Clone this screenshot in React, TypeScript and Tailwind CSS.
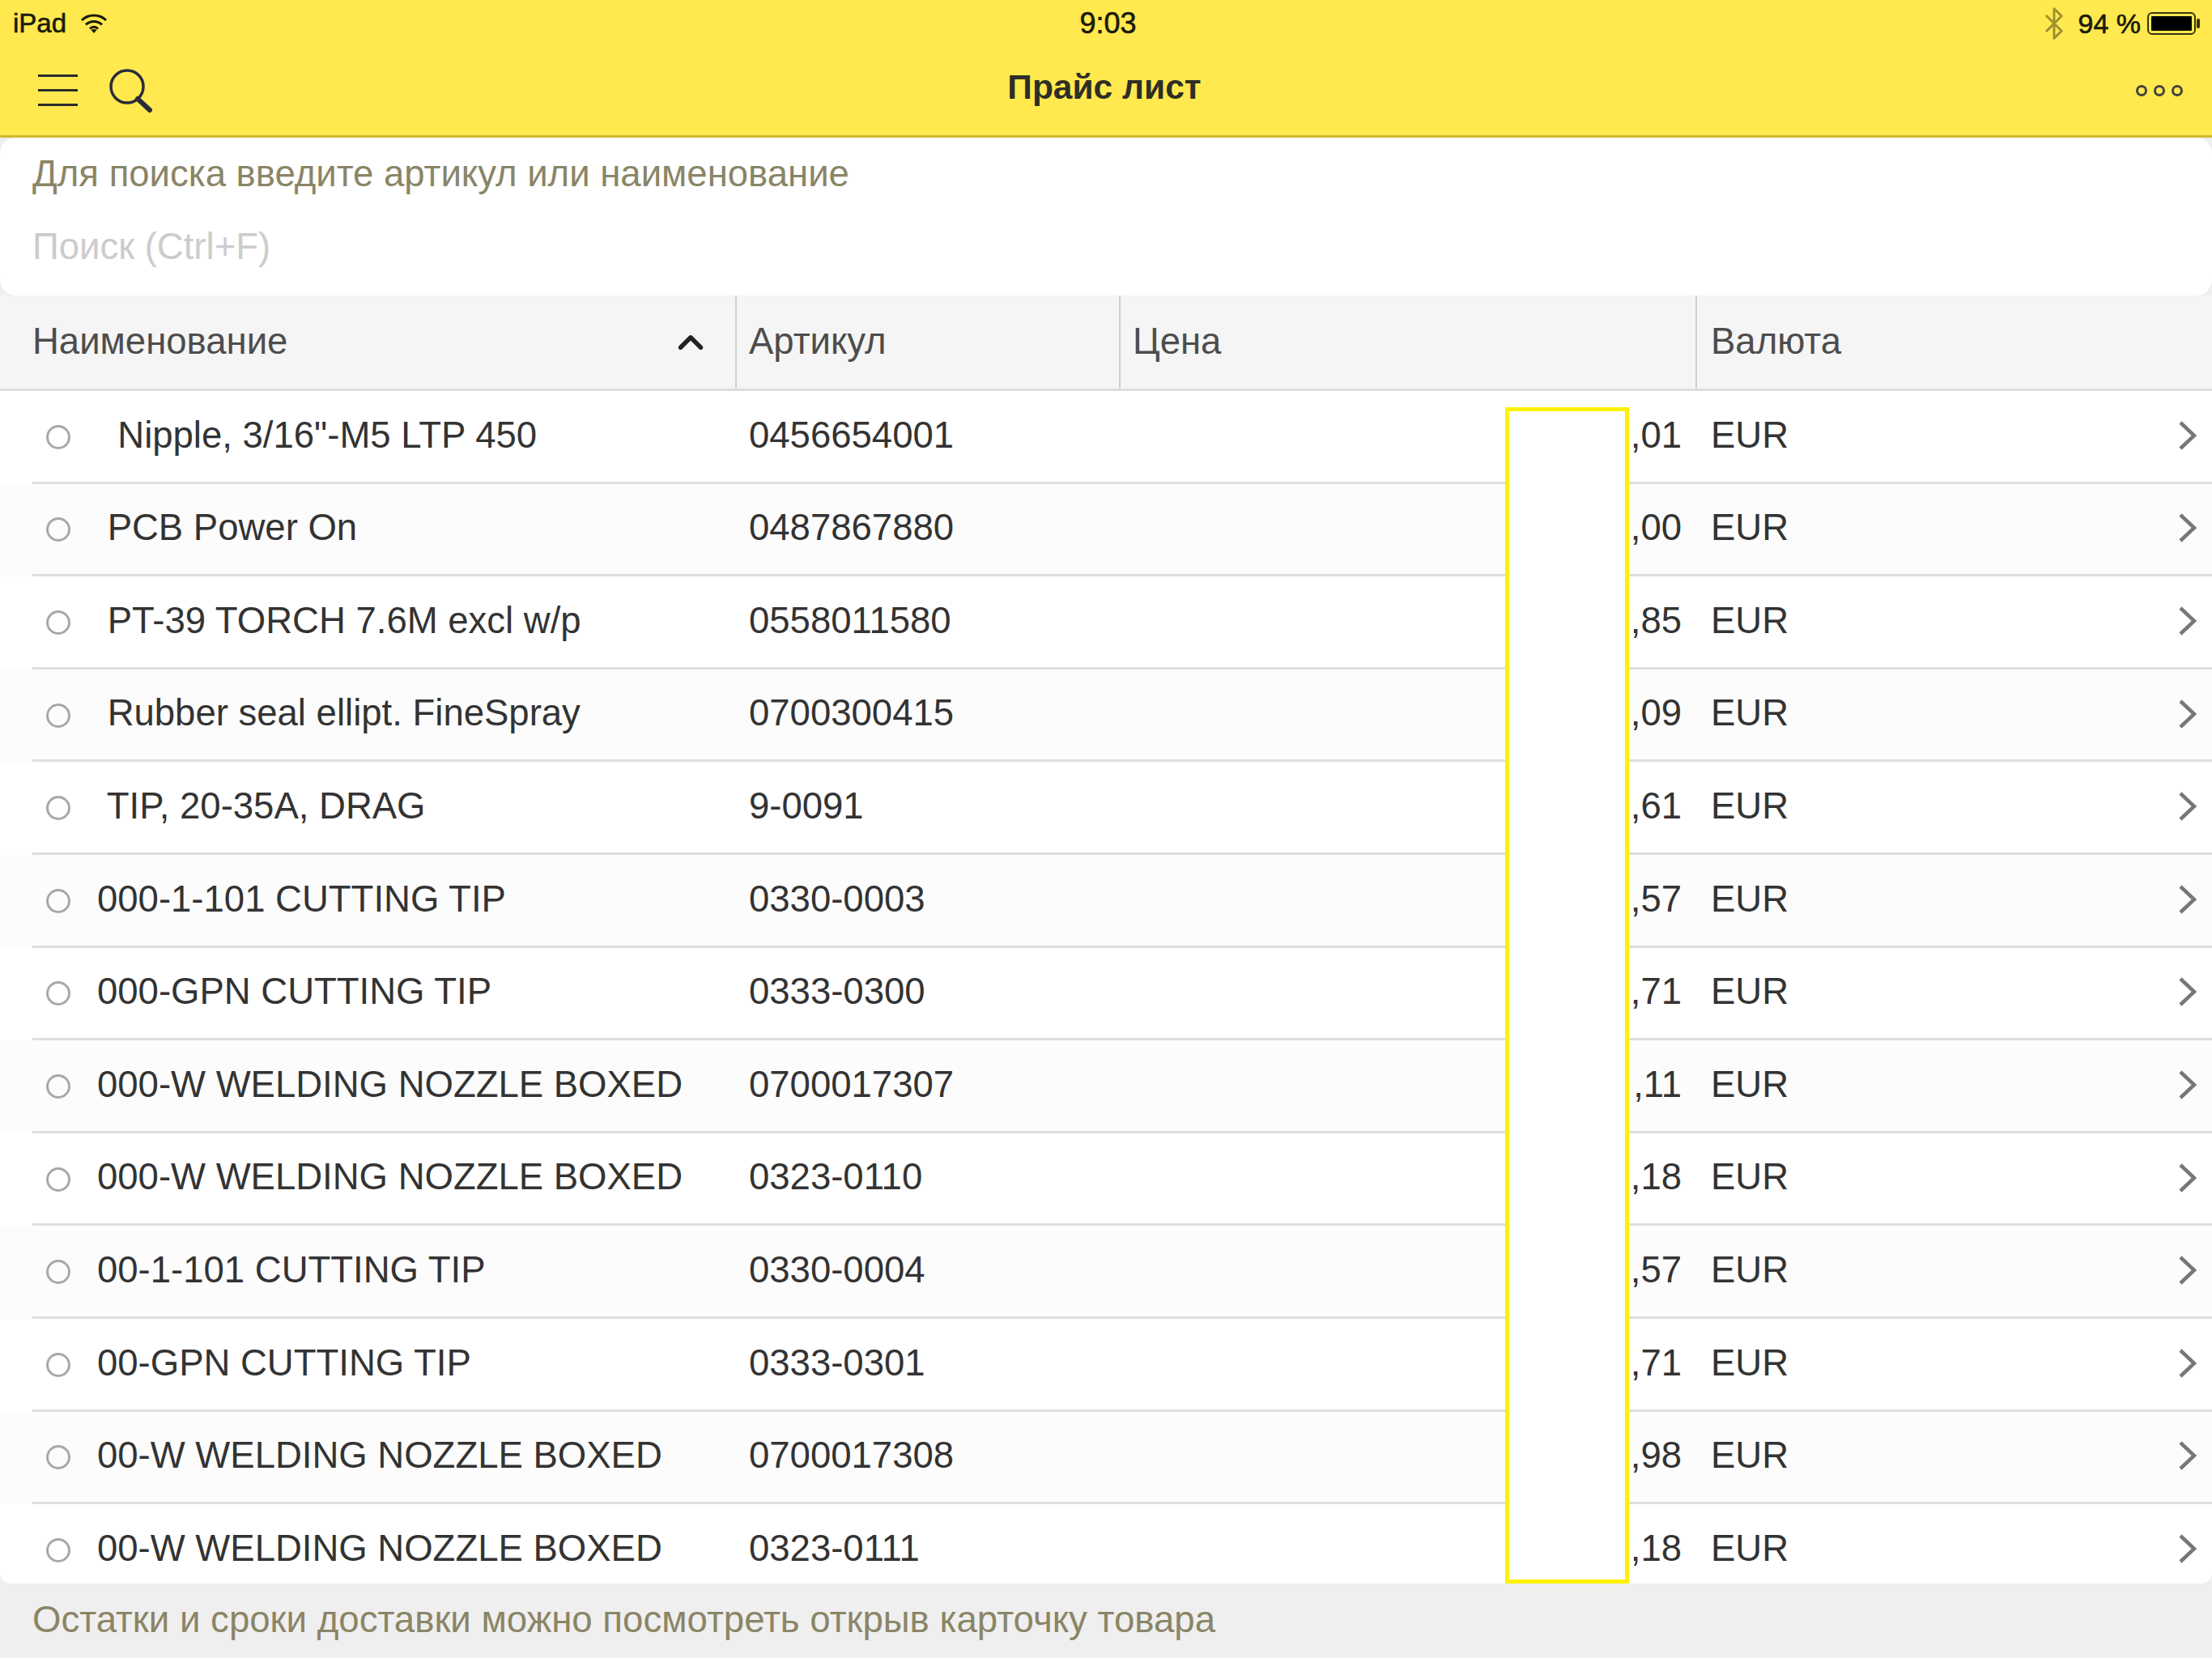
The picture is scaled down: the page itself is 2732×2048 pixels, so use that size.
import React from 'react';
import { Bluetooth, ChevronUp } from 'lucide-react';

const rows = [
  ['  Nipple, 3/16"-M5 LTP 450', '0456654001', ',01'],
  [' PCB Power On', '0487867880', ',00'],
  [' PT-39 TORCH 7.6M excl w/p', '0558011580', ',85'],
  [' Rubber seal ellipt. FineSpray', '0700300415', ',09'],
  [' TIP, 20-35A, DRAG', '9-0091', ',61'],
  ['000-1-101 CUTTING TIP', '0330-0003', ',57'],
  ['000-GPN CUTTING TIP', '0333-0300', ',71'],
  ['000-W WELDING NOZZLE BOXED', '0700017307', ',11'],
  ['000-W WELDING NOZZLE BOXED', '0323-0110', ',18'],
  ['00-1-101 CUTTING TIP', '0330-0004', ',57'],
  ['00-GPN CUTTING TIP', '0333-0301', ',71'],
  ['00-W WELDING NOZZLE BOXED', '0700017308', ',98'],
  ['00-W WELDING NOZZLE BOXED', '0323-0111', ',18'],
];

const StatusBar = () => (
  <div className="flex h-[56px] items-center justify-between px-[16px] pt-[2px] text-[#1a1a0a] [-webkit-text-stroke:0.6px_#1a1a0a]">
    <div className="flex w-[800px] items-center gap-[17px] text-[33px]">
      <span>iPad</span>
      <svg width="34" height="26" viewBox="0 0 34 26" fill="none" stroke="#1a1a0a">
        <path d="M2 9C10 1 24 1 32 9" strokeWidth="3" />
        <path d="M7 14.5C12.5 9 21.5 9 27 14.5" strokeWidth="3" />
        <path d="M12 19.5C15 16.5 19 16.5 22 19.5" strokeWidth="3" />
        <path d="M17 25L13.5 21C15.5 19.6 18.5 19.6 20.5 21Z" fill="#1a1a0a" stroke="none" />
      </svg>
    </div>
    <span className="pl-[5px] text-[36px]">9:03</span>
    <div className="flex w-[800px] items-center justify-end text-[34px]">
      <Bluetooth className="mr-[7px] h-[44px] w-[44px] text-[#9c9030]" strokeWidth={1.6} />
      <span className="mr-[8px]">94 %</span>
      <svg width="66" height="28" viewBox="0 0 66 28" className="mr-[-2px]">
        <rect x="1" y="1" width="58" height="26" rx="5" fill="none" stroke="#3a3510" strokeWidth="2" />
        <rect x="5" y="5" width="50" height="18" rx="1" fill="#000" />
        <rect x="61" y="8" width="4" height="12" rx="2" fill="#3a3510" />
      </svg>
    </div>
  </div>
);

const NavBar = () => (
  <div className="relative flex h-[114px] items-center justify-between border-b-[3px] border-[#cdb92e] pl-[47px] pr-[36px]">
    <div className="flex items-center gap-[38px]">
      <div className="flex w-[49px] flex-col gap-[15px]">
        <div className="h-[3px] bg-[#2b2b2b]" />
        <div className="h-[3px] bg-[#2b2b2b]" />
        <div className="h-[3px] bg-[#2b2b2b]" />
      </div>
      <svg width="56" height="56" viewBox="0 0 56 56" fill="none" stroke="#2b2b3a">
        <circle cx="23" cy="23" r="20" strokeWidth="3.5" />
        <path d="M36 38L51 52" strokeWidth="6" strokeLinecap="round" />
      </svg>
    </div>
    <span className="absolute inset-x-0 top-[20px] pr-[4px] text-center text-[42.5px] font-bold leading-[64px] text-[#2e2e24]">Прайс лист</span>
    <div className="flex gap-[8px]">
      <div className="h-[14px] w-[14px] rounded-full border-[3px] border-[#44443a]" />
      <div className="h-[14px] w-[14px] rounded-full border-[3px] border-[#44443a]" />
      <div className="h-[14px] w-[14px] rounded-full border-[3px] border-[#44443a]" />
    </div>
  </div>
);

const SearchPanel = () => (
  <div className="h-[195px] shrink-0 rounded-[20px] bg-white pl-[40px]">
    <div className="pt-[19px] text-[45.5px] leading-[52px] text-[#8a8566]">Для поиска введите артикул или наименование</div>
    <div className="pt-[38px] text-[45.5px] leading-[52px] text-[#cccccc]">Поиск (Ctrl+F)</div>
  </div>
);

const TableHeader = () => (
  <div className="grid h-[118px] grid-cols-[910px_474px_712px_1fr] border-b-[3px] border-[#dddddd] bg-[#f5f5f5] text-[45.5px] text-[#4d4d4d]">
    <div className="flex items-center justify-between border-r-2 border-[#d0d0d0] pl-[40px] pr-[30px]">
      <span>Наименование</span>
      <ChevronUp className="h-[50px] w-[50px] text-[#222222]" strokeWidth={2.6} />
    </div>
    <div className="flex items-center border-r-2 border-[#d0d0d0] pl-[15px]">Артикул</div>
    <div className="flex items-center border-r-2 border-[#d0d0d0] pl-[15px]">Цена</div>
    <div className="flex items-center pl-[17px]">Валюта</div>
  </div>
);

const Row = ({ name, code, price, odd }: { name: string; code: string; price: string; odd: boolean }) => (
  <div className={odd ? 'bg-[#fcfcfc] pl-[40px]' : 'bg-white pl-[40px]'}>
    <div className="grid h-[114.6px] grid-cols-[868px_474px_712px_1fr] items-center border-b-[3px] border-[#dedede] pb-[2px] text-[45.5px] text-[#333333]">
      <div className="flex items-center">
        <div className="ml-[17px] mt-[4px] h-[30px] w-[30px] rounded-full border-[3px] border-[#a8a8a8]" />
        <span className="ml-[33px] whitespace-pre">{name}</span>
      </div>
      <div className="pl-[17px]">{code}</div>
      <div className="pr-[17px] text-right">{price}</div>
      <div className="flex items-center justify-between pl-[19px] pr-[18px]">
        <span>EUR</span>
        <svg width="24" height="38" viewBox="0 0 24 38" fill="none" stroke="#777777" strokeWidth="4.5">
          <path d="M3 3L20 19L3 35" />
        </svg>
      </div>
    </div>
  </div>
);

export default function App() {
  return (
    <div className="flex h-[2048px] w-[2732px] flex-col overflow-hidden bg-[#efefef] font-['Liberation_Sans',Arial,sans-serif]">
      <div className="bg-[#ffe94f]">
        <StatusBar />
        <NavBar />
      </div>
      <SearchPanel />
      <div className="relative h-[1591px] shrink-0 overflow-hidden rounded-b-[14px] bg-white">
        <TableHeader />
        {rows.map((r, i) => (
          <Row key={i} name={r[0]} code={r[1]} price={r[2]} odd={i % 2 === 1} />
        ))}
        {/* price mask */}
        <div className="absolute bottom-0 left-[1859px] top-[138px] w-[153px] border-[5px] border-[#fff200] bg-white" />
      </div>
      <div className="pl-[40px] pt-[19px] text-[45.6px] leading-[52px] text-[#8a8566]">
        Остатки и сроки доставки можно посмотреть открыв карточку товара
      </div>
    </div>
  );
}
